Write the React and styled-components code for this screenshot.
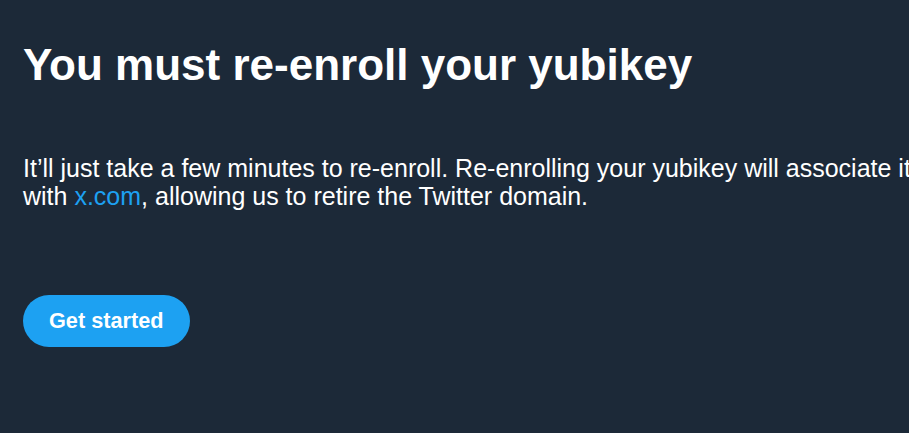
import styled, { createGlobalStyle } from "styled-components";

const GlobalStyle = createGlobalStyle`
  html, body {
    margin: 0;
    padding: 0;
    background: #1c2938;
    overflow: hidden;
  }
  body {
    font-family: "Liberation Sans", Arial, sans-serif;
  }
`;

const Page = styled.div`
  width: 100vw;
  height: 100vh;
  background: #1c2938;
  box-sizing: border-box;
  padding: 34px 23px;
`;

const Content = styled.div`
  width: 920px;
  display: flex;
  flex-direction: column;
  align-items: flex-start;
`;

const Title = styled.h1`
  margin: 0;
  color: #fff;
  font-size: 44px;
  font-weight: 700;
  line-height: 62px;
`;

const Text = styled.p`
  margin: 58px 0 0;
  color: #fff;
  font-size: 25px;
  line-height: 28px;
`;

const Link = styled.a`
  color: #1da1f2;
  text-decoration: none;
`;

const Button = styled.button`
  margin-top: 85px;
  height: 52px;
  padding: 0 26px;
  border: none;
  border-radius: 26px;
  background: #1da1f2;
  color: #fff;
  font-family: "Liberation Sans", Arial, sans-serif;
  font-size: 21.7px;
  font-weight: 700;
  cursor: pointer;
`;

export default function App() {
  return (
    <Page>
      <GlobalStyle />
      <Content>
        <Title>You must re-enroll your yubikey</Title>
        <Text>
          It’ll just take a few minutes to re-enroll. Re-enrolling your yubikey
          will associate it with <Link href="#">x.com</Link>, allowing us to
          retire the Twitter domain.
        </Text>
        <Button>Get started</Button>
      </Content>
    </Page>
  );
}
